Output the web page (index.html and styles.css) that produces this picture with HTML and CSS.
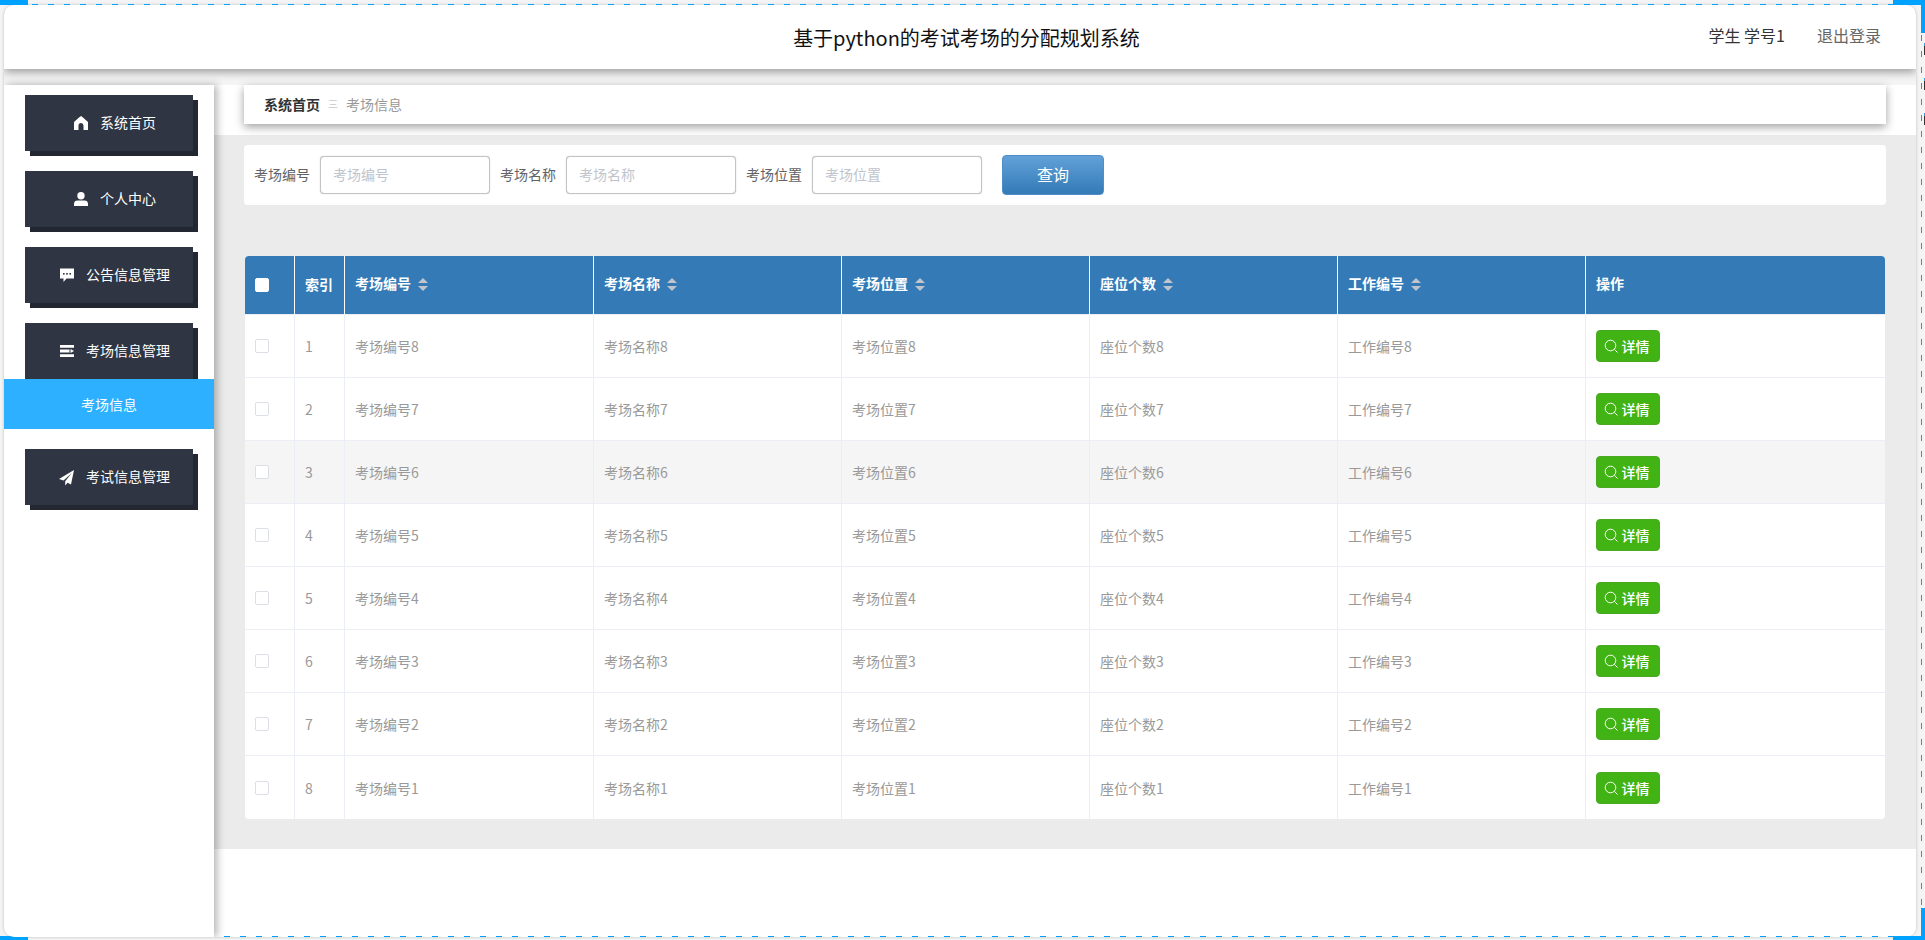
FILE: index.html
```html
<!DOCTYPE html>
<html lang="zh-CN">
<head>
<meta charset="utf-8">
<title>考场信息</title>
<link rel="stylesheet" href="styles.css">
</head>
<body>
<div class="page">
  <div class="app">
    <header class="topbar">
      <div class="title">基于python的考试考场的分配规划系统</div>
      <div class="user"><span class="who">学生 学号1</span><span class="logout">退出登录</span></div>
    </header>
    <div class="main">
      <aside class="sidebar">
        <div class="nav-item"><svg class="nav-icon" viewBox="0 0 14 14"><path d="M7 0 L9 1.5 L14 6 V14 H9.5 V9.5 A2.5 2.5 0 0 0 4.5 9.5 V14 H0 V6 L5 1.5 Z" fill="#fff"/></svg><span class="nav-text">系统首页</span></div>
        <div class="nav-item"><svg class="nav-icon" viewBox="0 0 14 14"><circle cx="7" cy="3.7" r="3.7" fill="#fff"/><path d="M0 14 V11.8 A3.6 3.6 0 0 1 3.6 8.4 H10.4 A3.6 3.6 0 0 1 14 11.8 V14 Z" fill="#fff"/></svg><span class="nav-text">个人中心</span></div>
        <div class="nav-item"><svg class="nav-icon" viewBox="0 0 14 14"><path d="M0 0.5 H14 V10.5 H6.5 L3.5 14 V10.5 H0 Z" fill="#fff"/><rect x="3" y="5" width="1.6" height="1.6" fill="#2f3542"/><rect x="6.2" y="5" width="1.6" height="1.6" fill="#2f3542"/><rect x="9.4" y="5" width="1.6" height="1.6" fill="#2f3542"/></svg><span class="nav-text">公告信息管理</span></div>
        <div class="nav-item"><svg class="nav-icon" viewBox="0 0 14 14"><path d="M0 1 H14 V3.8 H0 Z M0 5.6 H9.5 V8.4 H0 Z M14 7 L10.5 5 V9 Z M0 10.2 H14 V13 H0 Z" fill="#fff"/></svg><span class="nav-text">考场信息管理</span></div>
        <div class="nav-sub">考场信息</div>
        <div class="nav-item"><svg class="nav-icon plane" viewBox="0 0 14 14"><path d="M14 0 L0 8.3 L4.2 9.9 L12 2.8 L5.8 10.6 V14.4 L8 12 L11.2 13.6 Z" fill="#fff"/></svg><span class="nav-text">考试信息管理</span></div>
      </aside>
      <div class="content">
        <div class="crumb-zone">
          <nav class="crumb"><span class="crumb-home">系统首页</span><span class="crumb-sep">三</span><span class="crumb-cur">考场信息</span></nav>
        </div>
        <div class="panel">
          <form class="search">
            <label class="field-label">考场编号</label><input class="field" placeholder="考场编号">
            <label class="field-label">考场名称</label><input class="field" placeholder="考场名称">
            <label class="field-label">考场位置</label><input class="field" placeholder="考场位置">
            <button class="query" type="button">查询</button>
          </form>
          <table class="grid">
            <colgroup><col class="c-s"><col class="c-s"><col class="c-w"><col class="c-m"><col class="c-m"><col class="c-m"><col class="c-m"><col class="c-l"></colgroup>
            <thead>
              <tr>
                <th><span class="check head"></span></th>
                <th><span class="th-index">索引</span></th>
                <th><span class="th-text">考场编号</span><i class="sort"></i></th>
                <th><span class="th-text">考场名称</span><i class="sort"></i></th>
                <th><span class="th-text">考场位置</span><i class="sort"></i></th>
                <th><span class="th-text">座位个数</span><i class="sort"></i></th>
                <th><span class="th-text">工作编号</span><i class="sort"></i></th>
                <th><span class="th-text">操作</span></th>
              </tr>
            </thead>
            <tbody>
              <tr><td><span class="check"></span></td><td>1</td><td>考场编号8</td><td>考场名称8</td><td>考场位置8</td><td>座位个数8</td><td>工作编号8</td><td><button class="detail" type="button"><svg class="glass" viewBox="0 0 14 14"><circle cx="6.5" cy="6.5" r="5.3"/><path d="M10.4 10.4 L13.5 13.5"/></svg>详情</button></td></tr>
              <tr><td><span class="check"></span></td><td>2</td><td>考场编号7</td><td>考场名称7</td><td>考场位置7</td><td>座位个数7</td><td>工作编号7</td><td><button class="detail" type="button"><svg class="glass" viewBox="0 0 14 14"><circle cx="6.5" cy="6.5" r="5.3"/><path d="M10.4 10.4 L13.5 13.5"/></svg>详情</button></td></tr>
              <tr class="hover"><td><span class="check"></span></td><td>3</td><td>考场编号6</td><td>考场名称6</td><td>考场位置6</td><td>座位个数6</td><td>工作编号6</td><td><button class="detail" type="button"><svg class="glass" viewBox="0 0 14 14"><circle cx="6.5" cy="6.5" r="5.3"/><path d="M10.4 10.4 L13.5 13.5"/></svg>详情</button></td></tr>
              <tr><td><span class="check"></span></td><td>4</td><td>考场编号5</td><td>考场名称5</td><td>考场位置5</td><td>座位个数5</td><td>工作编号5</td><td><button class="detail" type="button"><svg class="glass" viewBox="0 0 14 14"><circle cx="6.5" cy="6.5" r="5.3"/><path d="M10.4 10.4 L13.5 13.5"/></svg>详情</button></td></tr>
              <tr><td><span class="check"></span></td><td>5</td><td>考场编号4</td><td>考场名称4</td><td>考场位置4</td><td>座位个数4</td><td>工作编号4</td><td><button class="detail" type="button"><svg class="glass" viewBox="0 0 14 14"><circle cx="6.5" cy="6.5" r="5.3"/><path d="M10.4 10.4 L13.5 13.5"/></svg>详情</button></td></tr>
              <tr><td><span class="check"></span></td><td>6</td><td>考场编号3</td><td>考场名称3</td><td>考场位置3</td><td>座位个数3</td><td>工作编号3</td><td><button class="detail" type="button"><svg class="glass" viewBox="0 0 14 14"><circle cx="6.5" cy="6.5" r="5.3"/><path d="M10.4 10.4 L13.5 13.5"/></svg>详情</button></td></tr>
              <tr><td><span class="check"></span></td><td>7</td><td>考场编号2</td><td>考场名称2</td><td>考场位置2</td><td>座位个数2</td><td>工作编号2</td><td><button class="detail" type="button"><svg class="glass" viewBox="0 0 14 14"><circle cx="6.5" cy="6.5" r="5.3"/><path d="M10.4 10.4 L13.5 13.5"/></svg>详情</button></td></tr>
              <tr><td><span class="check"></span></td><td>8</td><td>考场编号1</td><td>考场名称1</td><td>考场位置1</td><td>座位个数1</td><td>工作编号1</td><td><button class="detail" type="button"><svg class="glass" viewBox="0 0 14 14"><circle cx="6.5" cy="6.5" r="5.3"/><path d="M10.4 10.4 L13.5 13.5"/></svg>详情</button></td></tr>
            </tbody>
          </table>
        </div>
      </div>
    </div>
  </div>
  <i class="dash dash-top"></i>
  <i class="dash dash-bottom"></i>
  <i class="dash dash-right"></i>
  <i class="corner c-tl"></i>
  <i class="corner c-tr"></i>
  <i class="corner c-tr2"></i>
  <i class="corner c-bl"></i>
  <i class="corner c-br"></i>
  <i class="corner c-br2"></i>
  <i class="stub s1"></i>
  <i class="stub s2"></i>
  <i class="stub s3"></i>
</div>
</body>
</html>
```

FILE: styles.css
```css
* { box-sizing: border-box; }
html, body { margin: 0; padding: 0; }
body {
  font-family: "Noto Sans CJK SC", "Noto Sans", sans-serif;
  font-size: 14px;
  color: #666;
  overflow: hidden;
}
.page {
  position: relative;
  width: 1925px;
  height: 940px;
  padding: 5px 9px 3px 4px;
  background: #f4f4f4;
  overflow: hidden;
}
.app {
  height: 932px;
  display: flex;
  flex-direction: column;
  background: #f5f5f5;
  border-radius: 10px;
  box-shadow: 0 0 3px rgba(0, 0, 0, .25);
  overflow: hidden;
}
.topbar {
  position: relative;
  z-index: 3;
  flex: none;
  height: 64px;
  display: grid;
  align-items: center;
  background: #fff;
  box-shadow: 0 3px 9px rgba(0, 0, 0, .38);
}
.title {
  grid-area: 1 / 1;
  justify-self: center;
  padding: 0 0 0 13px;
  margin-top: 2px;
  font-size: 20px;
  line-height: 28px;
  color: #111;
}
.user {
  grid-area: 1 / 1;
  justify-self: end;
  display: flex;
  gap: 32px;
  padding-right: 35px;
  margin-top: -4px;
  font-size: 16px;
  line-height: 24px;
}
.who { color: #333; }
.logout { color: #666; }

.main {
  flex: 1;
  display: flex;
  margin-top: 16px;
  min-height: 0;
}
.sidebar {
  position: relative;
  z-index: 2;
  flex: none;
  width: 210px;
  padding-top: 10px;
  background: #fff;
  box-shadow: 3px 0 8px rgba(0, 0, 0, .3);
}
.nav-item {
  display: flex;
  align-items: center;
  justify-content: center;
  gap: 12px;
  width: 168px;
  height: 56px;
  margin: 0 0 20px 21px;
  padding-left: 12px;
  background: #2f3542;
  box-shadow: 5px 5px 0 #232731;
  color: #fff;
  white-space: nowrap;
}
.nav-text { padding-bottom: 2px; }
.nav-icon { flex: none; width: 14px; height: 14px; overflow: visible; }
.plane { width: 15px; height: 15px; margin-left: -1px; }
.nav-item:nth-of-type(4) { margin-bottom: 0; }
.nav-sub {
  position: relative;
  height: 50px;
  margin-bottom: 20px;
  line-height: 50px;
  text-align: center;
  background: #2cb0ff;
  color: #fff;
}

.content {
  flex: 1;
  min-width: 0;
  display: flex;
  flex-direction: column;
  background: #fff;
}
.crumb-zone {
  flex: none;
  height: 50px;
  padding: 0 30px;
}
.crumb {
  display: flex;
  align-items: center;
  height: 39px;
  padding: 0 0 2px 20px;
  background: #fff;
  box-shadow: 0 3px 9px rgba(0, 0, 0, .38);
  position: relative;
}
.crumb-home { color: #303133; font-weight: 700; }
.crumb-sep { margin: 0 8px; width: 10px; overflow: hidden; color: #c8c8c8; font-size: 10px; text-align: center; }
.crumb-cur { color: #999; }
.panel {
  height: 714px;
  padding: 10px 30px;
  background: #ebebeb;
}
.search {
  display: flex;
  align-items: center;
  height: 60px;
  margin-bottom: 51px;
  padding-left: 10px;
  background: #fff;
  border-radius: 4px;
}
.field-label {
  margin: 0 10px 2px 0;
  color: #606266;
  white-space: nowrap;
}
.field {
  width: 170px;
  height: 38px;
  margin-right: 10px;
  padding: 0 0 2px 12px;
  border: 1px solid #c4c4c4;
  border-radius: 4px;
  box-shadow: 0 0 1px #aaa;
  outline: 0;
  background: #fff;
  font: inherit;
}
.field::placeholder { color: #c0c4cc; opacity: 1; }
.query {
  width: 102px;
  height: 40px;
  margin-left: 10px;
  padding: 0 0 3px;
  border: 1px solid #4f8ec6;
  border-radius: 4px;
  background: linear-gradient(#62a1d8, #337ab7);
  color: #fff;
  font: inherit;
  font-size: 16px;
}
.grid {
  width: 1640px;
  margin-left: 1px;
  border-collapse: separate;
  border-spacing: 0;
  table-layout: fixed;
  background: #fff;
  border-radius: 4px;
  overflow: hidden;
}
.c-s { width: 50px; }
.c-w { width: 249px; }
.c-m { width: 248px; }
.c-l { width: 299px; }
.grid th {
  height: 59px;
  padding: 0 10px;
  background: #337ab7;
  color: #fff;
  font-weight: 700;
  text-align: left;
  white-space: nowrap;
  border-right: 1px solid #fff;
  border-bottom: 1px solid #ebeef5;
}
.th-text { position: relative; top: -2px; }
.th-index { position: relative; top: -1px; }
.grid th:last-child, .grid td:last-child { border-right: 0; }
.grid td {
  height: 63px;
  padding: 0 10px;
  color: #999;
  white-space: nowrap;
  border-right: 1px solid #ebeef5;
  border-bottom: 1px solid #ebeef5;
}
.grid tbody tr:last-child td { border-bottom: 0; }
.grid .hover td { background: #f5f5f5; }
.check {
  display: block;
  width: 14px;
  height: 14px;
  border: 1px solid #dcdfe6;
  border-radius: 2px;
  background: #fff;
}
.check.head { border-color: #fff; }
.sort {
  display: inline-block;
  position: relative;
  width: 10px;
  height: 13px;
  margin-left: 7px;
  vertical-align: 0;
}
.sort::before, .sort::after {
  content: "";
  position: absolute;
  left: 0;
  border-left: 5px solid transparent;
  border-right: 5px solid transparent;
}
.sort::before { top: 0; border-bottom: 5px solid #c0c4cc; }
.sort::after { bottom: 0; border-top: 5px solid #c0c4cc; }
.detail {
  display: flex;
  align-items: center;
  justify-content: center;
  gap: 4px;
  width: 64px;
  height: 32px;
  padding: 0 3px 0 0;
  border: 1px solid #4aa823;
  border-radius: 4px;
  background: #41b314;
  color: #fff;
  font: inherit;
  font-weight: 500;
}
.glass {
  flex: none;
  width: 14px;
  height: 14px;
  fill: none;
  stroke: #fff;
  stroke-width: 1;
}

.dash, .corner, .stub { position: absolute; display: block; }
.dash-top {
  top: 4px; left: 32px; width: 1861px; height: 1px;
  background: repeating-linear-gradient(90deg, #00a2ff 0 6px, transparent 6px 16px);
}
.dash-bottom {
  top: 936px; left: 32px; width: 1861px; height: 1px;
  background: repeating-linear-gradient(90deg, #00a2ff 0 6px, transparent 6px 16px);
}
.dash-right {
  top: 35px; left: 1921px; width: 1px; height: 873px;
  background: repeating-linear-gradient(180deg, #00a2ff 0 6px, transparent 6px 16px);
}
.corner { background: #00a2ff; }
.c-tl { top: 0; left: 0; width: 28px; height: 5px; }
.c-tr { top: 0; left: 1893px; width: 32px; height: 5px; }
.c-tr2 { top: 0; left: 1921px; width: 4px; height: 33px; }
.c-bl { top: 936px; left: 0; width: 28px; height: 4px; }
.c-br { top: 936px; left: 1893px; width: 32px; height: 4px; }
.c-br2 { top: 908px; left: 1921px; width: 4px; height: 32px; }
.stub {
  left: 1924px;
  width: 1px;
  height: 12px;
  background: linear-gradient(#2e9fe6 0 3px, #333 3px);
}
.s1 { top: 43px; }
.s2 { top: 78px; }
.s3 { top: 113px; }
```
